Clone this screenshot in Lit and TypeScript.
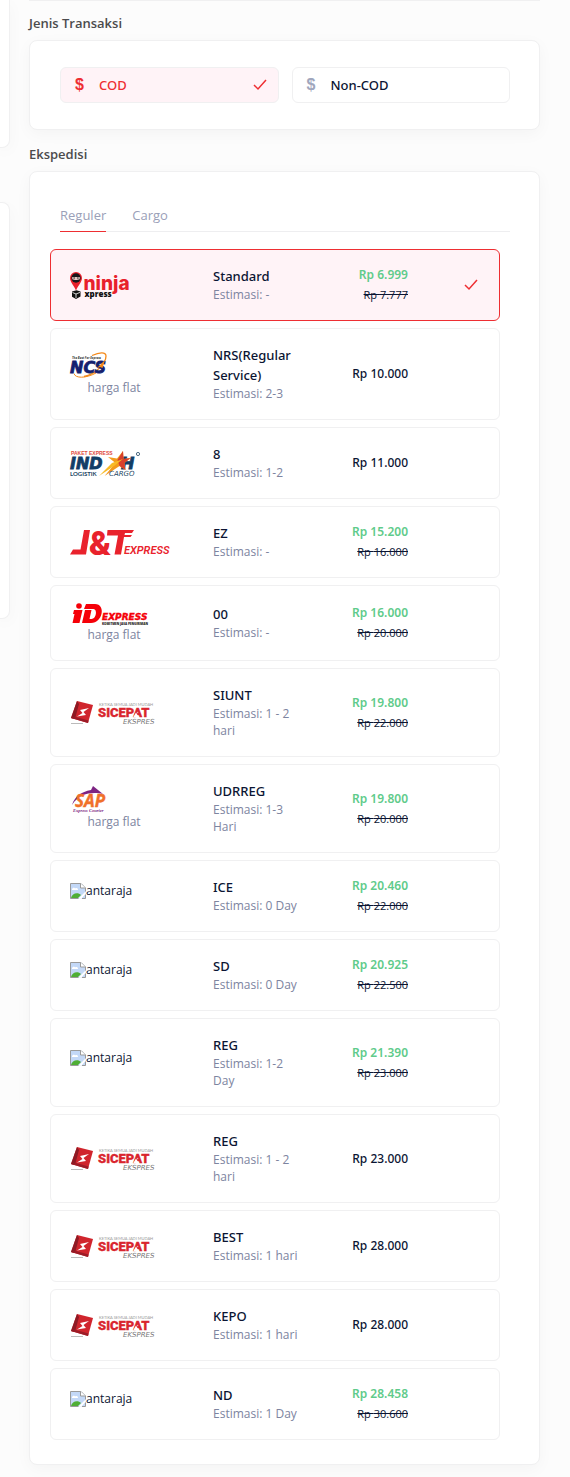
import { LitElement, html, css, svg, nothing } from "lit";
import { customElement, property, state } from "lit/decorators.js";
import { classMap } from "lit/directives/class-map.js";

type Courier = "ninja" | "ncs" | "indah" | "jnt" | "id" | "sicepat" | "sap" | "antaraja";

interface Service {
  courier: Courier;
  name: string;
  estimate: string;
  price: string;
  before?: string;
  flat?: boolean;
}

const SERVICES: Service[] = [
  { courier: "ninja", name: "Standard", estimate: "-", price: "6.999", before: "7.777" },
  { courier: "ncs", name: "NRS(Regular Service)", estimate: "2-3", price: "10.000", flat: true },
  { courier: "indah", name: "8", estimate: "1-2", price: "11.000" },
  { courier: "jnt", name: "EZ", estimate: "-", price: "15.200", before: "16.000" },
  { courier: "id", name: "00", estimate: "-", price: "16.000", before: "20.000", flat: true },
  { courier: "sicepat", name: "SIUNT", estimate: "1 - 2 hari", price: "19.800", before: "22.000" },
  { courier: "sap", name: "UDRREG", estimate: "1-3 Hari", price: "19.800", before: "20.000", flat: true },
  { courier: "antaraja", name: "ICE", estimate: "0 Day", price: "20.460", before: "22.000" },
  { courier: "antaraja", name: "SD", estimate: "0 Day", price: "20.925", before: "22.500" },
  { courier: "antaraja", name: "REG", estimate: "1-2 Day", price: "21.390", before: "23.000" },
  { courier: "sicepat", name: "REG", estimate: "1 - 2 hari", price: "23.000" },
  { courier: "sicepat", name: "BEST", estimate: "1 hari", price: "28.000" },
  { courier: "sicepat", name: "KEPO", estimate: "1 hari", price: "28.000" },
  { courier: "antaraja", name: "ND", estimate: "1 Day", price: "28.458", before: "30.600" },
];

const checkIcon = html`<svg width="14" height="12" viewBox="0 0 14 12" aria-hidden="true">
  <path d="M1 6 5 10 13 1" fill="none" stroke="#ee2e32" stroke-width="1.5" />
</svg>`;

const logos: Record<Exclude<Courier, "antaraja">, { w: number; h: number; art: unknown }> = {
  ninja: {
    w: 62, h: 27,
    art: svg`
      <path d="M6 0a6 6 0 0 1 6 6c0 4-3.600 7-6 12.500C3.600 13 0 10 0 6a6 6 0 0 1 6-6z" fill="#e8202b"/>
      <circle cx="6" cy="6" r="4.700" fill="#16161a"/>
      <path d="M2.300 5h7.400v2.300c-2.400 1-5 1-7.400 0z" fill="#f8d9d4"/>
      <path d="M3.300 6h1.900M6.800 6h1.900" stroke="#111" stroke-width="1"/>
      <path d="M2 19.500l4.500-1.300 4 1.300v5L6 27l-4-2.200z" fill="#111"/>
      <path d="M2.500 20.500l3.500 1.500 4-1.600M6 22v4" stroke="#fff" stroke-width=".8" fill="none"/>
      <text x="13.500" y="18" font-family="Inter" font-weight="800" font-size="19" fill="#e8202b">ninja</text>
      <text x="14.500" y="24.500" font-family="Open Sans" font-weight="800" font-size="8" fill="#111">xpress</text>`,
  },
  ncs: {
    w: 38, h: 27,
    art: svg`
      <path d="M22 3.500C29 .500 36-.500 36 4c0 7-10 18-22 20.500" fill="none" stroke="#f48a1c" stroke-width="1.300"/>
      <path d="M4 21.500c1 5 12 5 22-.500" fill="none" stroke="#f48a1c" stroke-width="1"/>
      <text x="2" y="6.500" font-family="Open Sans" font-style="italic" font-weight="700" font-size="3" fill="#333">The Best For Express</text>
      <text x="0" y="21" font-family="DejaVu Sans" font-style="italic" font-weight="700" font-size="16" fill="#14206e" stroke="#14206e" stroke-width=".8">NCS</text>
      <path d="M27 16l8-8-2.500 8-2.500-1z" fill="#f48a1c"/>`,
  },
  indah: {
    w: 71, h: 27,
    art: svg`
      <text x="1" y="5" font-family="Liberation Sans" font-weight="700" font-size="5" fill="#df4b3e">PAKET EXPRESS</text>
      <text x="0" y="18.500" font-family="DejaVu Sans" font-style="italic" font-weight="700" font-size="16" fill="#123d66" stroke="#123d66" stroke-width=".8">IND</text>
      <text x="51" y="18.500" font-family="DejaVu Sans" font-style="italic" font-weight="700" font-size="16" fill="#123d66" stroke="#123d66" stroke-width=".8">H</text>
      <path d="M38 7l9 1.500L53 1l.500 8 7-1-6 5 1 7-6-4-15 10 11-13z" fill="#f39a1d"/>
      <path d="M53 1l.500 8 7-1-6 5 1 7-6-4-2-6z" fill="#d8402c"/>
      <path d="M29 26l13-13 11-4-9 7z" fill="#f8ba25"/>
      <text x="0" y="25.500" font-family="Lato" font-weight="700" font-size="6" fill="#234764">LOGISTIK</text>
      <text x="39" y="25.500" font-family="DejaVu Sans" font-style="italic" font-size="7" fill="#234764">CARGO</text>
      <circle cx="68" cy="4" r="1.600" fill="none" stroke="#234764" stroke-width=".8"/>`,
  },
  jnt: {
    w: 101, h: 27,
    art: svg`
      <path d="M0 25.500l3-5h7.500L14 1h6l-4 24.500zM37.500 1H64l-2 3h-7l-.500 2H62l-1.500 2H54l-3 17.500h-6.500l3.500-19H37z" fill="#e9222c"/>
      <text x="19" y="25.500" font-family="Roboto" font-weight="900" font-size="33" fill="#e9222c">&amp;</text>
      <text x="54" y="25" font-family="Roboto" font-style="italic" font-weight="600" font-size="11" fill="#e9222c">EXPRESS</text>`,
  },
  id: {
    w: 82, h: 24,
    art: svg`
      <circle cx="9" cy="4" r="2.800" fill="#f50008"/>
      <path d="M4 8h8.500L9.500 21H2.500l2-9H3zM16 2h9c11 0 8 19-4 19H12l3-13h6.500l-2 9h2c5 0 6-10 2-10H14z" fill="#f50008"/>
      <text x="32" y="18" font-family="DejaVu Sans" font-style="italic" font-weight="700" font-size="9" fill="#f50008" stroke="#f50008" stroke-width=".4">EXPRESS</text>
      <text x="32" y="22.500" font-family="Open Sans" font-weight="800" font-size="3" fill="#222">KOMITMEN JASA PENGIRIMAN</text>`,
  },
  sicepat: {
    w: 88, h: 27,
    art: svg`
      <path d="M7 2l16 4-5 18L1 19z" fill="#d0252d"/>
      <path d="M7 2L1 19l4 1L9 5z" fill="#8d1a24"/>
      <path d="M1 19l17 5 .600-2.400L6 18z" fill="#9c1c27"/>
      <path d="M19 9l-9 2 2.500 3L7 17.500l9-1.500-2.500-3z" fill="#fff"/>
      <path d="M1 24.500h12" stroke="#bbb" stroke-width="1"/>
      <text x="29" y="6.500" font-family="Lato" font-size="4" fill="#999">KETIKA SEMUA JADI MUDAH</text>
      <text x="28" y="18" font-family="Roboto" font-weight="900" font-size="13" fill="#d9252e" stroke="#d9252e" stroke-width=".3">SICEPAT</text>
      <path d="M63 18.500l3-5 3 5z" fill="#fff"/>
      <text x="53" y="24.500" font-family="DejaVu Sans" font-style="italic" font-size="7" fill="#777">EKSPRES</text>`,
  },
  sap: {
    w: 38, h: 27,
    art: svg`
      <path d="M2 19C5 10 11 6 21 4l2-4 10 8C24 6 10 6 2 19z" fill="#7d2483"/>
      <text x="5" y="20.500" font-family="Open Sans" font-style="italic" font-weight="700" font-size="17" fill="#f0702a" stroke="#f0702a" stroke-width=".4">SAP</text>
      <text x="3" y="25.500" font-family="Liberation Serif" font-style="italic" font-weight="700" font-size="4.500" fill="#7d2483">Express Courier</text>`,
  },
};

const brokenImage = html`<svg width="16" height="16" viewBox="0 0 16 16" aria-hidden="true">
  <path d="M.5.5H11L15.500 5v10.500H.5z" fill="#c3d8f7" />
  <path d="M2 6.500c0-2 3-2 3-1 2-1 3 0 3 1.500H2z" fill="#fff" />
  <path d="M1 15c1-5 7-6 10-3l-3 3z" fill="#4fae35" />
  <path d="M8.500 15.500l7-7v2.500l-4 4.500z" fill="#fff" />
  <path d="M.5 15.500V.5H11L15.500 5v3.500M.5 15.500h8M12 15.500h3.500v-4" fill="none" stroke="#9a9a9a" />
  <path d="M10.500.5V5h5" fill="#fff" stroke="#9a9a9a" />
</svg>`;

@customElement("courier-logo")
export class CourierLogo extends LitElement {
  @property() courier: Courier = "ninja";

  static styles = css`
    :host { display: block; }
    svg { display: block; flex: none; overflow: visible; }
    .missing {
      display: flex;
      align-items: center;
      padding-bottom: 10px;
      font-size: 12px;
      line-height: 18px;
      color: #0b1533;
    }
  `;

  render() {
    if (this.courier === "antaraja") {
      return html`<div class="missing">${brokenImage}<span>antaraja</span></div>`;
    }
    const { w, h, art } = logos[this.courier];
    return html`<svg width=${w} height=${h} viewBox="0 0 ${w} ${h}" role="img" aria-label=${this.courier}>${art}</svg>`;
  }
}

@customElement("app-root")
export class AppRoot extends LitElement {
  @state() private payment = "COD";
  @state() private tab = "Reguler";
  @state() private selected = 0;

  static styles = css`
    :host {
      display: block;
      background: #fcfcfc;
      color: #0b1533;
      font-family: "Open Sans", "Noto Sans", sans-serif;
      font-size: 13px;
      line-height: 20px;
      overflow: hidden;
    }
    * { box-sizing: border-box; }
    .page {
      display: grid;
      grid-template-columns: 10px minmax(0, 1fr);
      column-gap: 19px;
      padding: 0 30px 12px 0;
    }
    .card {
      background: #fff;
      border: 1px solid #f0f0f1;
      border-radius: 8px;
      box-shadow: 0 4px 16px rgba(0, 0, 0, 0.035);
    }
    .side { display: flex; flex-direction: column; gap: 54px; }
    .side .card { border-left: 0; border-radius: 0 8px 8px 0; }
    .side .side-top { height: 148px; border-top: 0; border-top-right-radius: 0; }
    .side-bottom { height: 417px; }
    .above { height: 1px; border-width: 0 0 1px; border-radius: 0; }
    h2 {
      margin: 0;
      padding: 12px 0 7px;
      font-size: 13px;
      line-height: 20px;
      font-weight: 600;
      color: #4b4b4d;
    }
    .payments + h2 { padding-top: 14px; }
    .payments {
      display: grid;
      grid-template-columns: 1fr 1fr;
      gap: 13px;
      padding: 26px 29px 26px 30px;
    }
    .payment {
      display: flex;
      align-items: center;
      height: 36px;
      padding: 0 11px 0 14px;
      border: 1px solid #f0f0f1;
      border-radius: 6px;
      cursor: pointer;
    }
    .payment, .name, .price {
      font-family: "Noto Sans", "Open Sans", sans-serif;
      font-weight: 500;
    }
    .dollar {
      width: 24px;
      font-family: "Liberation Sans", Arial, sans-serif;
      font-size: 16px;
      font-weight: 700;
      color: #a0a6bd;
    }
    .payment .label { flex: 1; }
    .payment.on { background: #fff3f7; color: #ee2e32; }
    .payment.on .dollar { color: #ee2e32; }
    input[type="radio"] {
      appearance: none;
      width: 0;
      height: 0;
      margin: 0;
      outline: 0;
    }
    .shipping { padding: 29px 20px 24px; }
    .tabs {
      display: flex;
      gap: 26px;
      margin: 0 9px 17px 10px;
      border-bottom: 1px solid #eeeef0;
    }
    .tab {
      height: 31px;
      margin-bottom: -1px;
      padding: 0 0 3px;
      border: 0;
      border-bottom: 1px solid transparent;
      background: none;
      font: inherit;
      color: #9aa0b8;
      cursor: pointer;
    }
    .tab.on { border-bottom-color: #ee2e32; }
    .services {
      display: flex;
      flex-direction: column;
      gap: 7px;
      padding-right: 19px;
    }
    .service {
      display: grid;
      grid-template-columns: 143fr 90fr 105fr 70fr;
      align-items: center;
      padding: 14px 21px 14px 19px;
      border: 1px solid #f0f0f1;
      border-radius: 6px;
      cursor: pointer;
    }
    .service.on { background: #fff3f7; border-color: #ee2e32; }
    .brand { justify-self: start; min-width: 88px; padding: 2px 0; }
    .info { padding: 2px 0 3px; }
    .muted {
      font-size: 12px;
      line-height: 17px;
      color: #7d84a0;
    }
    .flat { text-align: center; line-height: 18px; }
    .price { text-align: right; font-size: 12px; }
    .sale { color: #5fcb8b; font-weight: 600; }
    .before {
      font-family: "Open Sans", "Noto Sans", sans-serif;
      font-size: 11px;
      font-weight: 400;
      text-decoration: line-through;
    }
    .mark { display: flex; justify-content: flex-end; }
    svg { display: block; }
  `;

  private renderPayment(name: string) {
    const on = this.payment === name;
    return html`<label class=${classMap({ payment: true, on })}>
      <span class="dollar" aria-hidden="true">$</span>
      <span class="label">${name}</span>
      <input type="radio" name="payment" .checked=${on} @change=${() => (this.payment = name)} />
      ${on ? checkIcon : nothing}
    </label>`;
  }

  private renderTab(name: string) {
    const on = this.tab === name;
    return html`<button type="button" role="tab" aria-selected=${on} class=${classMap({ tab: true, on })}
      @click=${() => (this.tab = name)}>${name}</button>`;
  }

  private renderService(s: Service, index: number) {
    const on = this.selected === index;
    return html`<label class=${classMap({ service: true, on })}>
      <div class="brand">
        <courier-logo .courier=${s.courier}></courier-logo>
        ${s.flat ? html`<div class="muted flat">harga flat</div>` : nothing}
      </div>
      <div class="info">
        <div class="name">${s.name}</div>
        <div class="muted">Estimasi: ${s.estimate}</div>
      </div>
      <div class="price">
        <div class=${classMap({ sale: !!s.before })}>Rp ${s.price}</div>
        ${s.before ? html`<div class="before">Rp ${s.before}</div>` : nothing}
      </div>
      <div class="mark">
        <input type="radio" name="service" .checked=${on} @change=${() => (this.selected = index)} />
        ${on ? checkIcon : nothing}
      </div>
    </label>`;
  }

  render() {
    return html`<div class="page">
      <div class="side">
        <div class="card side-top"></div>
        <div class="card side-bottom"></div>
      </div>
      <main>
        <div class="card above"></div>
        <h2>Jenis Transaksi</h2>
        <section class="card payments">${["COD", "Non-COD"].map((n) => this.renderPayment(n))}</section>
        <h2>Ekspedisi</h2>
        <section class="card shipping">
          <div class="tabs" role="tablist">${["Reguler", "Cargo"].map((n) => this.renderTab(n))}</div>
          <div class="services">${SERVICES.map((s, i) => this.renderService(s, i))}</div>
        </section>
      </main>
    </div>`;
  }
}
